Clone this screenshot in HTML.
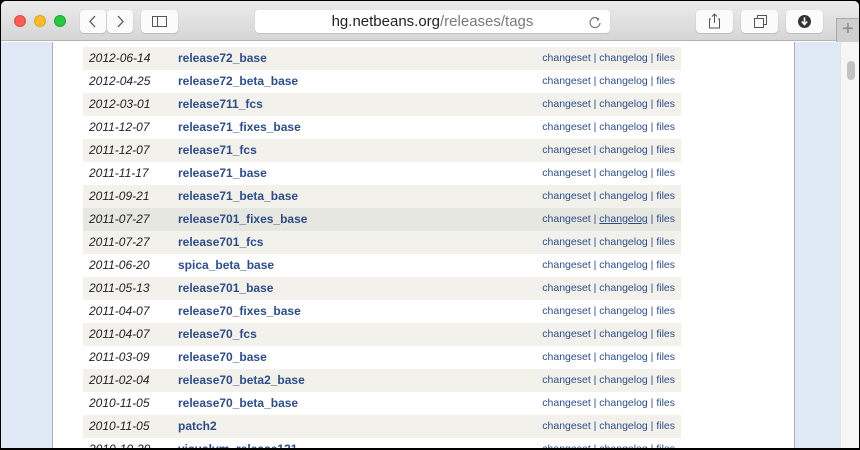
<!DOCTYPE html>
<html><head><meta charset="utf-8"><style>
*{margin:0;padding:0;box-sizing:border-box}
body{width:860px;height:450px;overflow:hidden;background:#000;font-family:"Liberation Sans",sans-serif;position:relative}
.win{position:absolute;left:1px;top:1px;width:858px;height:447px;border-radius:5px 5px 0 0;overflow:hidden;background:#fff}
.tb{position:absolute;left:0;top:0;width:858px;height:40px;background:linear-gradient(#ebebeb,#d6d6d6);border-bottom:1px solid #b4b4b4;z-index:10}
.dot{position:absolute;top:14px;width:12px;height:12px;border-radius:50%}
.btn{position:absolute;top:9px;height:23px;background:#fbfbfb;border-radius:4px;box-shadow:0 0.5px 1px rgba(0,0,0,.25)}
.url{position:absolute;left:254px;top:9px;width:355px;height:23px;background:#fff;border-radius:4px;box-shadow:0 0.5px 1px rgba(0,0,0,.2);font-size:15px;line-height:23px;color:#7a7a7a;text-align:center}
.url b{font-weight:normal;color:#222}
.lb{position:absolute;left:0;top:41px;width:52px;height:410px;background:#dfe8f5;border-right:1px solid #a9adb2}
.rb{position:absolute;left:793px;top:41px;width:46px;height:410px;background:#dfe8f5;border-left:1px solid #a9adb2}
.sb{position:absolute;left:839px;top:41px;width:19px;height:410px;background:#f6f6f6;border-left:1px solid #e3e3e3}
.thumb{position:absolute;left:846px;top:60px;width:8px;height:19px;border-radius:4px;background:#c2c2c2}
.plus{position:absolute;left:835px;top:17px;width:23px;height:24px;background:#cfcfcf;border-left:1px solid #aaa;border-top:1px solid #aaa;color:#888;font-size:20px;line-height:21px;text-align:center;font-weight:200}
.row{position:absolute;left:82px;width:598px;height:23px;font-size:12px;line-height:23px}
.g{background:#f2f1ec}.w{background:#fff}.h{background:#e7e7e1}
.d{position:absolute;left:6px;font-style:italic;color:#222}
.n{position:absolute;left:95px;font-weight:bold;color:#2e4d87}
.l{position:absolute;right:6px;font-size:10.5px;color:#2e4d87}
</style></head><body><div class="win">
<div class="tb">
<div class="dot" style="left:13px;background:#fc5f57;border:.5px solid #de4a41"></div>
<div class="dot" style="left:33px;background:#fdbc2e;border:.5px solid #dea022"></div>
<div class="dot" style="left:53px;background:#28c840;border:.5px solid #1fa92f"></div>
<div class="btn" style="left:79px;width:26px"><svg width="26" height="23"><path d="M15 6 L10 11.5 L15 17" stroke="#555" stroke-width="1.3" fill="none"/></svg></div>
<div class="btn" style="left:106px;width:26px"><svg width="26" height="23"><path d="M11 6 L16 11.5 L11 17" stroke="#555" stroke-width="1.3" fill="none"/></svg></div>
<div class="btn" style="left:140px;width:37px"><svg width="37" height="23"><rect x="11.5" y="6.5" width="14" height="10" fill="none" stroke="#555"/><line x1="16.5" y1="6.5" x2="16.5" y2="16.5" stroke="#555"/></svg></div>
<div class="url"><b>hg.netbeans.org</b>/releases/tags<svg style="position:absolute;right:8px;top:5px" width="14" height="14"><path d="M10.5 4 A5 5 0 1 0 12 8" stroke="#777" stroke-width="1.2" fill="none"/><path d="M8 2 L11.5 3.5 L9.5 6.5Z" fill="#777"/></svg></div>
<div class="btn" style="left:695px;width:37px"><svg width="37" height="23"><path d="M15 9 H13.5 V18 H23.5 V9 H22 M18.5 13 V4 M16 6.5 L18.5 4 L21 6.5" stroke="#555" fill="none"/></svg></div>
<div class="btn" style="left:740px;width:37px"><svg width="37" height="23"><rect x="13.5" y="8.5" width="9" height="9" fill="none" stroke="#555"/><path d="M16.5 8.5 V5.5 H25.5 V14.5 H22.5" fill="none" stroke="#555"/></svg></div>
<div class="btn" style="left:785px;width:37px"><svg width="37" height="23"><circle cx="18.5" cy="11.5" r="6.5" fill="#333"/><path d="M18.5 7.5 V14 M15.8 11.5 L18.5 14.5 L21.2 11.5" stroke="#fff" stroke-width="1.6" fill="none"/></svg></div>
<div class="plus">+</div>
</div>
<div class="lb"></div><div class="rb"></div><div class="sb"></div><div class="thumb"></div>
<div class="row g" style="top:46px"><span class="d">2012-06-14</span><span class="n">release72_base</span><span class="l">changeset | changelog | files</span></div>
<div class="row w" style="top:69px"><span class="d">2012-04-25</span><span class="n">release72_beta_base</span><span class="l">changeset | changelog | files</span></div>
<div class="row g" style="top:92px"><span class="d">2012-03-01</span><span class="n">release711_fcs</span><span class="l">changeset | changelog | files</span></div>
<div class="row w" style="top:115px"><span class="d">2011-12-07</span><span class="n">release71_fixes_base</span><span class="l">changeset | changelog | files</span></div>
<div class="row g" style="top:138px"><span class="d">2011-12-07</span><span class="n">release71_fcs</span><span class="l">changeset | changelog | files</span></div>
<div class="row w" style="top:161px"><span class="d">2011-11-17</span><span class="n">release71_base</span><span class="l">changeset | changelog | files</span></div>
<div class="row g" style="top:184px"><span class="d">2011-09-21</span><span class="n">release71_beta_base</span><span class="l">changeset | changelog | files</span></div>
<div class="row h" style="top:207px"><span class="d">2011-07-27</span><span class="n">release701_fixes_base</span><span class="l">changeset | <u>changelog</u> | files</span></div>
<div class="row g" style="top:230px"><span class="d">2011-07-27</span><span class="n">release701_fcs</span><span class="l">changeset | changelog | files</span></div>
<div class="row w" style="top:253px"><span class="d">2011-06-20</span><span class="n">spica_beta_base</span><span class="l">changeset | changelog | files</span></div>
<div class="row g" style="top:276px"><span class="d">2011-05-13</span><span class="n">release701_base</span><span class="l">changeset | changelog | files</span></div>
<div class="row w" style="top:299px"><span class="d">2011-04-07</span><span class="n">release70_fixes_base</span><span class="l">changeset | changelog | files</span></div>
<div class="row g" style="top:322px"><span class="d">2011-04-07</span><span class="n">release70_fcs</span><span class="l">changeset | changelog | files</span></div>
<div class="row w" style="top:345px"><span class="d">2011-03-09</span><span class="n">release70_base</span><span class="l">changeset | changelog | files</span></div>
<div class="row g" style="top:368px"><span class="d">2011-02-04</span><span class="n">release70_beta2_base</span><span class="l">changeset | changelog | files</span></div>
<div class="row w" style="top:391px"><span class="d">2010-11-05</span><span class="n">release70_beta_base</span><span class="l">changeset | changelog | files</span></div>
<div class="row g" style="top:414px"><span class="d">2010-11-05</span><span class="n">patch2</span><span class="l">changeset | changelog | files</span></div>
<div class="row w" style="top:437px"><span class="d">2010-10-29</span><span class="n">visualvm_release131</span><span class="l">changeset | changelog | files</span></div>
</div></body></html>
